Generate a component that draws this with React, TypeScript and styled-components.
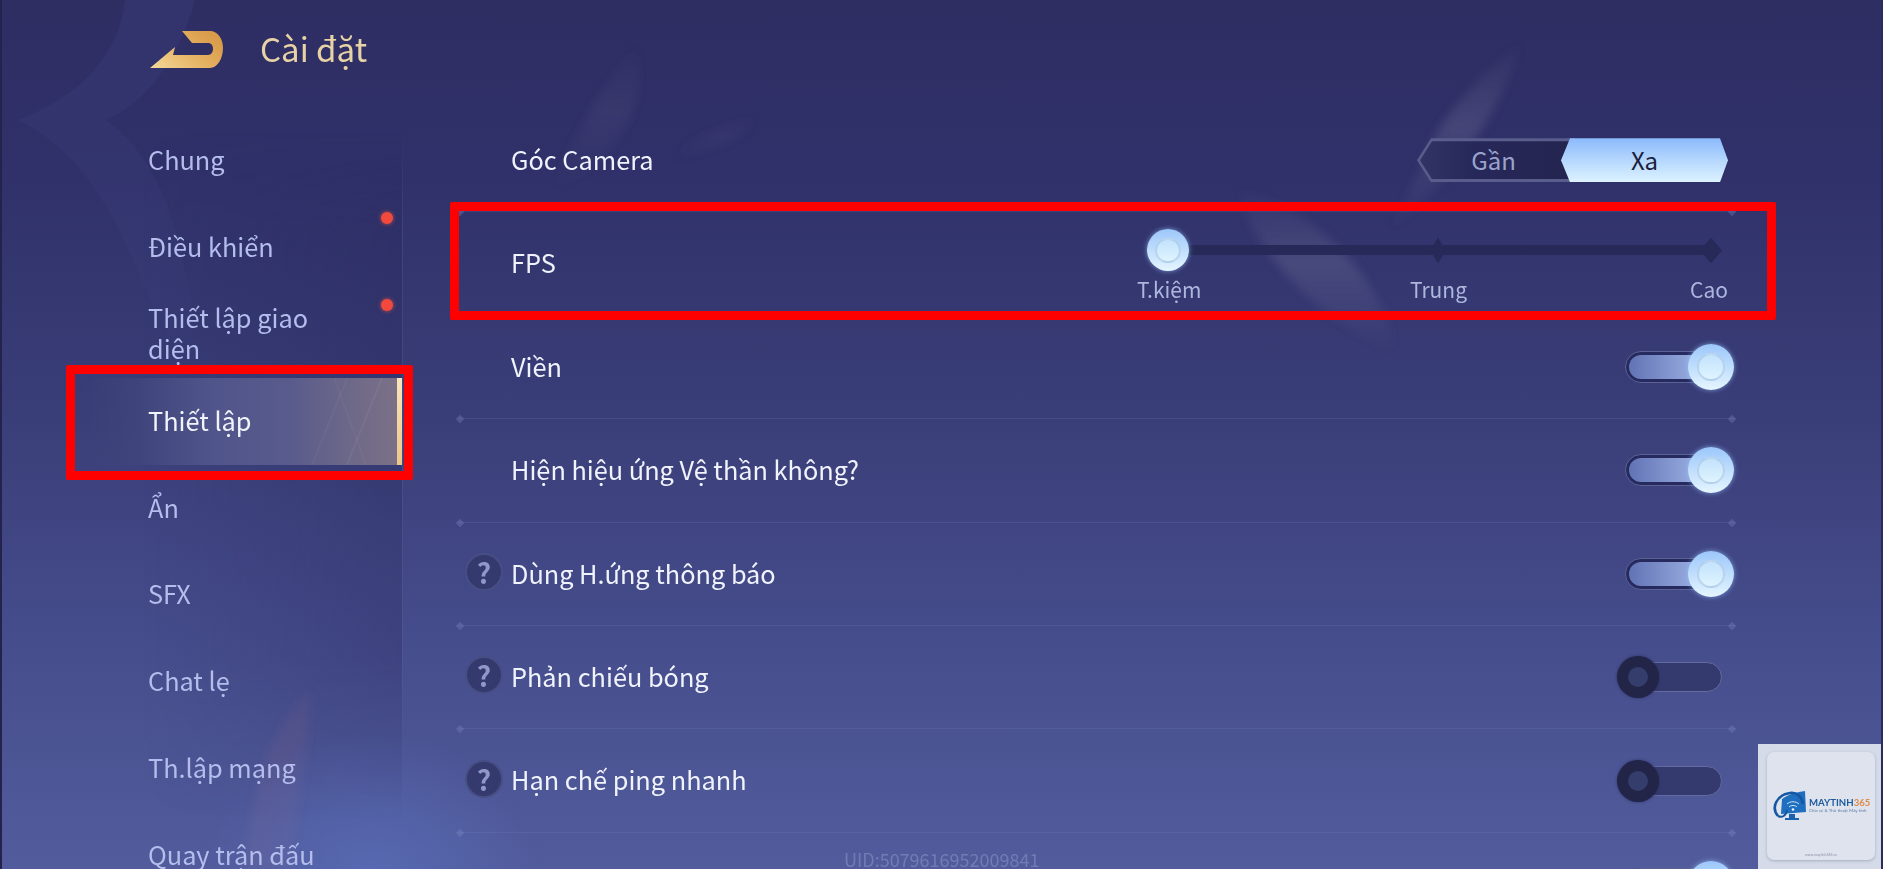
import React from "react";
import styled, { createGlobalStyle } from "styled-components";

const Global = createGlobalStyle`
  html, body { margin: 0; padding: 0; background: #2e2e63; }
  * { box-sizing: border-box; }
`;

const Page = styled.div`
  position: relative;
  width: 1883px;
  height: 869px;
  overflow: hidden;
  font-family: "Noto Sans CJK SC", "Noto Sans", sans-serif;
  background: linear-gradient(180deg, #2e2e63 0%, #30316a 20%, #3a3e78 48%, #454c8b 72%, #525c9c 100%);
  border-left: 2px solid #23234e;
  border-right: 2px solid #2a2a5c;
`;

const Decor = styled.svg`
  position: absolute;
  left: -2px;
  top: 0;
  width: 1883px;
  height: 869px;
  pointer-events: none;
`;

const Shell = styled.div`
  position: relative;
  display: flex;
  flex-direction: column;
  height: 100%;
`;

const Header = styled.header`
  display: flex;
  align-items: center;
  height: 100px;
  flex: none;
  padding-left: 148px;
  gap: 36px;
`;

const Title = styled.h1`
  margin: 0;
  padding-bottom: 4px;
  font-size: 33px;
  font-weight: 400;
  line-height: 1;
  color: #e8d3a6;
`;

const Body = styled.div`
  display: grid;
  grid-template-columns: 401px 1fr;
  flex: 1;
  min-height: 0;
`;

const Nav = styled.nav`
  position: relative;
  padding-top: 18px;
  &::before {
    content: "";
    position: absolute;
    inset: 0;
    border-right: 1px solid rgba(95, 100, 155, 0.3);
    background: linear-gradient(90deg, rgba(35, 35, 85, 0) 35%, rgba(35, 35, 85, 0.24) 100%);
    -webkit-mask-image: linear-gradient(180deg, transparent 30px, #000 130px, #000 560px, transparent 720px);
    mask-image: linear-gradient(180deg, transparent 30px, #000 130px, #000 560px, transparent 720px);
  }
`;

const NavItem = styled.div<{ $active?: boolean }>`
  position: relative;
  display: flex;
  align-items: center;
  height: 86.8px;
  margin-right: 1px;
  padding: 0 50px 3px 146px;
  font-size: 25.3px;
  line-height: 31px;
  color: ${(p) => (p.$active ? "#f2f4fc" : "#b4bdec")};
  ${(p) =>
    p.$active
      ? `background:
          linear-gradient(112deg, transparent 79%, rgba(200,190,200,.07) 79.3%, transparent 79.7%),
          linear-gradient(112deg, transparent 87%, rgba(200,190,200,.1) 87.3%, transparent 87.7%),
          linear-gradient(70deg, transparent 84%, rgba(200,190,200,.06) 84.3%, transparent 84.7%),
          linear-gradient(90deg, rgba(70,75,125,0) 20%, #3f447c 34%, #4f548a 52%, #595b8c 72%, #716b88 90%, #7c7187 100%);`
      : ""}
`;

const ActiveMark = styled.i`
  position: absolute;
  right: 0;
  top: 0;
  bottom: 0;
  width: 5px;
  background: linear-gradient(180deg, #f8e6bc, #ecc78c);
`;

const Dot = styled.i<{ $top: number }>`
  position: absolute;
  left: 379px;
  top: ${(p) => p.$top}px;
  width: 12px;
  height: 12px;
  border-radius: 50%;
  background: #f2493c;
  box-shadow: 0 0 4px rgba(255, 90, 70, 0.7);
`;

const Highlight = styled.div<{ $l: number; $t: number; $r: number; $b: number }>`
  position: absolute;
  left: ${(p) => p.$l}px;
  top: ${(p) => p.$t}px;
  right: ${(p) => p.$r}px;
  bottom: ${(p) => p.$b}px;
  border: 9px solid #fe0000;
  border-radius: 2px;
  pointer-events: none;
  z-index: 2;
`;

const Main = styled.main`
  padding-left: 55px;
  padding-top: 9px;
  padding-right: 146px;
`;

const Row = styled.div`
  position: relative;
  display: flex;
  align-items: center;
  justify-content: space-between;
  height: 103.4px;
  padding-left: 53px;
  border-bottom: 1px solid rgba(130, 140, 200, 0.17);
  &::before,
  &::after {
    content: "";
    position: absolute;
    bottom: -4px;
    width: 6px;
    height: 6px;
    transform: rotate(45deg);
    background: rgba(130, 140, 200, 0.32);
  }
  &::before { left: -1px; }
  &::after { right: 0; }
`;

const Label = styled.span`
  padding-bottom: 1px;
  font-size: 25.3px;
  color: #f0f3fc;
  line-height: 1;
`;

const Help = styled.span`
  position: absolute;
  left: 7px;
  top: 50%;
  margin-top: -21px;
  width: 38px;
  height: 38px;
  border-radius: 50%;
  display: flex;
  align-items: center;
  justify-content: center;
  background: #343a6e;
  border: 2px solid rgba(115, 125, 185, 0.3);
  color: #8f98c8;
  font-size: 28px;
  font-weight: 700;
  line-height: 1;
`;

const Segmented = styled.div`
  display: flex;
  margin-right: 7px;
`;

const SegOff = styled.div`
  width: 158px;
  height: 44px;
  padding: 3px 0 3px 3px;
  background: #585d8b;
  clip-path: polygon(0 50%, 14px 0, 100% 0, 100% 100%, 14px 100%);
`;

const SegOffInner = styled.div`
  display: flex;
  align-items: center;
  justify-content: center;
  height: 100%;
  padding: 0 8px 2px 0;
  font-size: 24px;
  color: #9aa3cc;
  background: linear-gradient(90deg, #333466, #27285a 35%, #24244f);
  clip-path: polygon(0 50%, 12px 0, 100% 0, 100% 100%, 12px 100%);
`;

const SegOn = styled.div`
  display: flex;
  align-items: center;
  justify-content: center;
  width: 167px;
  height: 44px;
  margin-left: -14px;
  padding-bottom: 2px;
  font-size: 24px;
  color: #1b1f40;
  background: linear-gradient(180deg, #8bb9fb 0%, #b5d7fd 50%, #dcf2ff 100%);
  clip-path: polygon(0 50%, 9px 0, 159px 0, 100% 50%, 159px 100%, 9px 100%);
`;

const Slider = styled.div`
  align-self: flex-start;
  width: 589px;
  margin-top: 17px;
  margin-right: 9px;
`;

const SliderTrack = styled.div`
  position: relative;
  height: 42px;
  display: flex;
  align-items: center;
  padding-left: 32px;
`;

const SliderBar = styled.div`
  width: 100%;
  height: 10px;
  margin-right: 15px;
  background: #272a58;
`;

const Tick = styled.i<{ $left: number }>`
  position: absolute;
  left: ${(p) => p.$left}px;
  top: 50%;
  width: 16px;
  height: 26px;
  background: #272a58;
  clip-path: polygon(50% 0, 100% 50%, 50% 100%, 0 50%);
  transform: translate(-50%, -50%);
`;

const TickEnd = styled.i`
  position: absolute;
  right: 4px;
  top: 50%;
  width: 22px;
  height: 26px;
  background: #272a58;
  clip-path: polygon(50% 0, 100% 50%, 50% 100%, 0 50%);
  transform: translateY(-50%);
`;

const Knob = styled.span<{ $size: number }>`
  position: absolute;
  display: block;
  width: ${(p) => p.$size}px;
  height: ${(p) => p.$size}px;
  border-radius: 50%;
  background: linear-gradient(180deg, #9cc7fb 0%, #c3e0fd 55%, #e6f6ff 100%);
  box-shadow: 0 0 5px rgba(150, 195, 255, 0.7);
  &::after {
    content: "";
    position: absolute;
    inset: 20%;
    border-radius: 50%;
    background: linear-gradient(180deg, #c3e2fd, #dff4fe);
    border: 2px solid rgba(165, 195, 225, 0.6);
  }
`;

const SliderKnob = styled(Knob)`
  left: 10px;
  top: 0;
`;

const SliderLabels = styled.div`
  display: grid;
  grid-template-columns: 64px 1fr 36px;
  margin-top: 5px;
  font-size: 21px;
  line-height: 26px;
  color: #aeb6de;
  white-space: nowrap;
`;

const MidLabel = styled.span`
  justify-self: center;
  padding-right: 14px;
`;

const ToggleOn = styled.div`
  position: relative;
  width: 109px;
  height: 46px;
  margin-right: 1px;
  flex: none;
`;

const OnTrack = styled.div`
  position: absolute;
  left: 0;
  top: 7px;
  width: 93px;
  height: 32px;
  padding: 3px;
  border-radius: 16px;
  background: #262a5e;
  border: 1px solid #5a6296;
  &::after {
    content: "";
    display: block;
    height: 100%;
    border-radius: 12px;
    background: linear-gradient(90deg, #6273b4 0%, #a7bdec 100%);
  }
`;

const OnKnob = styled(Knob)`
  right: 0;
  top: 0;
`;

const ToggleOff = styled.div`
  position: relative;
  width: 105px;
  height: 42px;
  margin-right: 13px;
  flex: none;
`;

const OffTrack = styled.div`
  position: absolute;
  right: 0;
  top: 6px;
  width: 88px;
  height: 30px;
  border-radius: 0 15px 15px 0;
  background: #353a6e;
  border: 1px solid #636a9f;
`;

const OffKnob = styled.span`
  position: absolute;
  left: 0;
  top: 0;
  width: 42px;
  height: 42px;
  border-radius: 50%;
  background: #222448;
  box-shadow: 0 0 3px rgba(30, 30, 70, 0.6);
  &::after {
    content: "";
    position: absolute;
    inset: 11px;
    border-radius: 50%;
    background: #343d6c;
  }
`;

const Uid = styled.div`
  position: absolute;
  left: 842px;
  top: 849px;
  font-size: 18px;
  line-height: 20px;
  color: rgba(170, 180, 225, 0.36);
`;

const Watermark = styled.aside`
  position: absolute;
  right: -2px;
  bottom: 0;
  width: 125px;
  height: 125px;
  padding: 8px 8px 9px 9px;
  background: #d5dbe8;
`;

const WatermarkCard = styled.div`
  position: relative;
  display: flex;
  align-items: center;
  gap: 2px;
  height: 100%;
  padding: 0 0 0 6px;
  border-radius: 7px;
  background: #dfe3ed;
  box-shadow: 0 1px 3px rgba(120, 130, 160, 0.5);
`;

const BrandText = styled.div`
  display: flex;
  flex-direction: column;
  font-family: "Lato", "Noto Sans", sans-serif;
  line-height: 1;
`;

const BrandName = styled.span`
  font-size: 9.6px;
  font-weight: 700;
  color: #1d5a9c;
  white-space: nowrap;
`;

const BrandOrange = styled.span`
  color: #dd8b48;
`;

const BrandTag = styled.span`
  margin-top: 1px;
  font-size: 4.5px;
  color: #5e7ca6;
  white-space: nowrap;
`;

const BrandUrl = styled.span`
  position: absolute;
  left: 0;
  right: 0;
  bottom: 3px;
  text-align: center;
  font-family: "Lato", sans-serif;
  font-size: 3.5px;
  color: #8b93a8;
`;

const BackIcon = () => (
  <svg width="74" height="40" viewBox="0 0 74 40">
    <defs>
      <linearGradient id="gold" x1="0" x2="1" y1="1" y2="0.4">
        <stop offset="0" stopColor="#f4d99b" />
        <stop offset="0.55" stopColor="#e6b566" />
        <stop offset="1" stopColor="#d99c4a" />
      </linearGradient>
    </defs>
    <path
      fill="url(#gold)"
      d="M0 38 L25 17 L23 25 H58 C61 25 63 22 63 19 C63 15 61 13 58 13 H42 L32 1 H60 C68 1 73 9 73 18 C73 29 67 38 60 38 Z"
    />
  </svg>
);

const BrandLogo = () => (
  <svg width="34" height="34" viewBox="0 0 34 34" style={{ flex: "none" }}>
    <path fill="#1f6fc0" d="M9 10 C16 5 24 3 32 2 L33 23 L8 25 Z" />
    <path fill="#1a62b0" d="M16 25 H22 V29 H26 V31 H12 V29 H16 Z" />
    <path fill="none" stroke="#1557a3" strokeWidth="2.6" d="M5 27 C-2 19 3 6 17 4 C24 3 29 8 30 15" />
    <path fill="none" stroke="#cfe6f6" strokeWidth="1" d="M14 15 C17 12 23 12 26 15 M16 18 C18 16 22 16 24 18" />
    <circle cx="20" cy="20.5" r="1.3" fill="#e5f3fb" />
    <path fill="none" stroke="#1557a3" strokeWidth="2" d="M5 27 C9 29 13 27 14 21" />
  </svg>
);

const rows = [
  { label: "Viền", help: false, on: true },
  { label: "Hiện hiệu ứng Vệ thần không?", help: false, on: true },
  { label: "Dùng H.ứng thông báo", help: true, on: true },
  { label: "Phản chiếu bóng", help: true, on: false },
  { label: "Hạn chế ping nhanh", help: true, on: false },
];

const navItems = [
  "Chung",
  "Điều khiển",
  "Thiết lập giao diện",
  "Thiết lập",
  "Ẩn",
  "SFX",
  "Chat lẹ",
  "Th.lập mạng",
  "Quay trận đấu",
];

export default function App() {
  return (
    <Page>
      <Global />
      <Decor viewBox="0 0 1883 869">
        <defs>
          <radialGradient id="glow" cx="50%" cy="50%" r="50%">
            <stop offset="0" stopColor="#5a72c0" stopOpacity="0.6" />
            <stop offset="1" stopColor="#5a72c0" stopOpacity="0" />
          </radialGradient>
          <linearGradient id="feather" x1="0" x2="0" y1="0" y2="1">
            <stop offset="0" stopColor="#8a8aa8" stopOpacity="0" />
            <stop offset="0.45" stopColor="#8a8aa8" stopOpacity="0.24" />
            <stop offset="1" stopColor="#8a8aa8" stopOpacity="0" />
          </linearGradient>
          <linearGradient id="star" x1="0" x2="0" y1="0" y2="1">
            <stop offset="0" stopColor="#3f4384" stopOpacity="0.28" />
            <stop offset="0.7" stopColor="#3f4384" stopOpacity="0.16" />
            <stop offset="1" stopColor="#3f4384" stopOpacity="0" />
          </linearGradient>
          <filter id="soft" x="-30%" y="-30%" width="160%" height="160%">
            <feGaussianBlur stdDeviation="5" />
          </filter>
        </defs>
        <path
          fill="url(#star)"
          d="M125 0 C120 50 85 95 18 120 C80 150 115 210 150 300 L200 400 C195 300 180 170 105 120 C140 105 175 70 195 0 Z"
        />
        <g filter="url(#soft)">
          <path fill="url(#feather)" d="M1522 40 C1490 70 1440 110 1420 170 C1405 200 1395 220 1389 233 C1440 190 1500 120 1522 40 Z" />
          <path fill="url(#feather)" d="M1238 187 C1250 250 1320 320 1395 353 C1390 290 1320 210 1238 187 Z" />
          <path fill="url(#feather)" opacity="0.4" d="M637 43 C600 90 570 140 551 193 C610 170 650 110 637 43 Z" />
          <path fill="url(#feather)" opacity="0.3" d="M760 115 C720 125 690 140 670 160 C710 155 740 140 760 115 Z" />
          <path fill="#b87a8a" opacity="0.1" d="M310 690 C270 730 250 790 245 869 H290 C300 790 310 740 310 690 Z" />
        </g>
        <ellipse cx="370" cy="870" rx="170" ry="140" fill="url(#glow)" />
      </Decor>
      <Shell>
        <Header>
          <BackIcon />
          <Title>Cài đặt</Title>
        </Header>
        <Body>
          <Nav>
            {navItems.map((n) => (
              <NavItem key={n} $active={n === "Thiết lập"}>
                {n}
                {n === "Thiết lập" && <ActiveMark />}
                {n === "Thiết lập" && <Highlight $l={64} $t={-13} $r={-11} $b={-15} />}
              </NavItem>
            ))}
            <Dot $top={112} />
            <Dot $top={199} />
          </Nav>
          <Main>
            <Row>
              <Label>Góc Camera</Label>
              <Segmented>
                <SegOff>
                  <SegOffInner>Gần</SegOffInner>
                </SegOff>
                <SegOn>Xa</SegOn>
              </Segmented>
            </Row>
            <Row>
              <Label>FPS</Label>
              <Slider>
                <SliderTrack>
                  <SliderBar />
                  <Tick $left={301} />
                  <TickEnd />
                  <SliderKnob $size={42} />
                </SliderTrack>
                <SliderLabels>
                  <span>T.kiệm</span>
                  <MidLabel>Trung</MidLabel>
                  <span>Cao</span>
                </SliderLabels>
              </Slider>
              <Highlight $l={-8} $t={-10} $r={-41} $b={-5} />
            </Row>
            {rows.map((r) => (
              <Row key={r.label}>
                {r.help && <Help>?</Help>}
                <Label>{r.label}</Label>
                {r.on ? (
                  <ToggleOn>
                    <OnTrack />
                    <OnKnob $size={46} />
                  </ToggleOn>
                ) : (
                  <ToggleOff>
                    <OffTrack />
                    <OffKnob />
                  </ToggleOff>
                )}
              </Row>
            ))}
            <Row>
              <Label />
              <ToggleOn>
                <OnTrack />
                <OnKnob $size={46} />
              </ToggleOn>
            </Row>
          </Main>
        </Body>
        <Uid>UID:5079616952009841</Uid>
        <Watermark>
          <WatermarkCard>
            <BrandLogo />
            <BrandText>
              <BrandName>
                MAYTINH<BrandOrange>365</BrandOrange>
              </BrandName>
              <BrandTag>Chia sẻ &amp; Thủ thuật Máy tính</BrandTag>
            </BrandText>
            <BrandUrl>www.maytinh365.vn</BrandUrl>
          </WatermarkCard>
        </Watermark>
      </Shell>
    </Page>
  );
}
